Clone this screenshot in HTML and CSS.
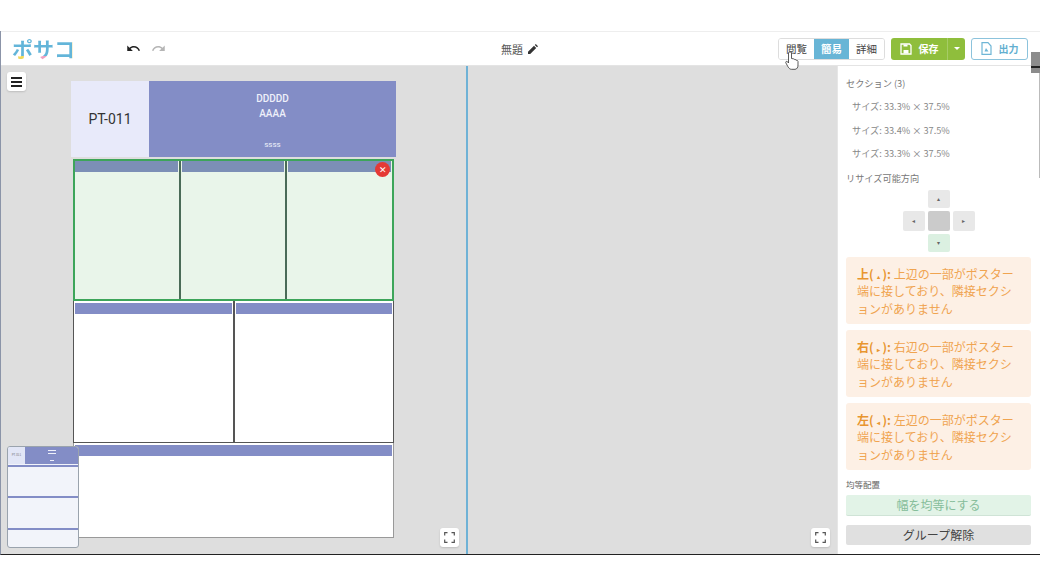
FILE: index.html
```html
<!DOCTYPE html>
<html lang="ja">
<head>
    <meta charset="UTF-8" />
    <title>ポサコ</title>
    <link rel="stylesheet" href="styles.css">
</head>

<body>
    <div class="app">
        <header class="topbar">
            <div class="logo"><span class="logo-a">ポ</span><span class="logo-b">サ</span><span class="logo-c">コ</span></div>
            <div class="history">
                <svg width="15" height="15" viewBox="0 0 24 24"><path d="M12.500 8c-2.650 0-5.050.990-6.900 2.600L2 7v9h9l-3.620-3.620c1.390-1.160 3.160-1.880 5.120-1.880 3.540 0 6.550 2.310 7.600 5.500l2.370-.780C21.080 11.030 17.150 8 12.500 8z" fill="#222"/></svg>
                <svg width="15" height="15" viewBox="0 0 24 24"><path d="M18.400 10.600C16.550 8.990 14.150 8 11.500 8c-4.650 0-8.580 3.030-9.960 7.220L3.900 16c1.050-3.190 4.050-5.500 7.600-5.500 1.950 0 3.730.720 5.120 1.880L13 16h9V7z" fill="#b5b5b5"/></svg>
            </div>
            <div class="title">
                <span>無題</span>
                <svg width="10" height="10" viewBox="0 0 10 10"><path d="M0 10V7.800L6 1.800 8.200 4 2.200 10zM6.800 1 7.800 0 10 2.200 9 3.200z" fill="#333"/></svg>
            </div>
            <div class="mode-group">
                <button class="mode">閲覧</button>
                <button class="mode active">簡易</button>
                <button class="mode">詳細</button>
            </div>
            <div class="save-group">
                <button class="save">
                    <svg width="12" height="12" viewBox="0 0 12 12"><path d="M1 1h8.500L11 2.500V11H1z" fill="none" stroke="#fff" stroke-width="1.300"/><path d="M3.500 1.500h4v2h-4zM3.500 7h5v3.500h-5z" fill="#fff"/></svg>
                    保存
                </button>
                <button class="save-arrow"><i></i></button>
            </div>
            <button class="export">
                <svg width="11" height="13" viewBox="0 0 11 13"><path d="M1 .700h6L10 4v8.300H1z" fill="none" stroke="#6fb6d6" stroke-width="1.200"/><path d="M3.500 9.500 5 6l2.500 3.500z" fill="#6fb6d6"/></svg>
                出力
            </button>
            <div class="edge-tab"></div>
        </header>

        <main class="workspace">
            <section class="pane pane-left">
                <button class="menu-btn"><i></i><i></i><i></i></button>

                <div class="poster">
                    <div class="poster-head">
                        <div class="poster-id">PT-011</div>
                        <div class="poster-title">
                            <div>DDDDD</div>
                            <div>AAAA</div>
                            <small>ssss</small>
                        </div>
                    </div>
                    <div class="poster-body">
                        <div class="row row-top">
                            <div class="cell"><div class="cell-bar"></div></div>
                            <div class="cell"><div class="cell-bar"></div></div>
                            <div class="cell"><div class="cell-bar"></div><span class="close">✕</span></div>
                        </div>
                        <div class="row row-mid">
                            <div class="cell"><div class="cell-bar"></div></div>
                            <div class="cell"><div class="cell-bar"></div></div>
                        </div>
                        <div class="row row-bottom">
                            <div class="cell"><div class="cell-bar"></div></div>
                        </div>
                    </div>
                </div>

                <div class="minimap">
                    <div class="mini-head">
                        <div class="mini-id">PT-011</div>
                        <div class="mini-title"><i></i><i></i><b></b></div>
                    </div>
                    <div class="mini-row mini-r1"></div>
                    <div class="mini-row mini-r2"></div>
                    <div class="mini-row mini-r3"></div>
                </div>

                <button class="fit-btn"><svg width="11" height="11" viewBox="0 0 11 11"><path d="M.700 3.500V.700h2.800M7.500.700h2.800v2.800M10.300 7.500v2.800H7.500M3.500 10.300H.700V7.500" fill="none" stroke="#555" stroke-width="1.200"/></svg></button>
            </section>

            <section class="pane pane-right">
                <button class="fit-btn"><svg width="11" height="11" viewBox="0 0 11 11"><path d="M.700 3.500V.700h2.800M7.500.700h2.800v2.800M10.300 7.500v2.800H7.500M3.500 10.300H.700V7.500" fill="none" stroke="#555" stroke-width="1.200"/></svg></button>
            </section>

            <aside class="sidebar">
                <h4>セクション (3)</h4>
                <ul class="size-list">
                    <li>サイズ: 33.3% × 37.5%</li>
                    <li>サイズ: 33.4% × 37.5%</li>
                    <li>サイズ: 33.3% × 37.5%</li>
                </ul>
                <h4 class="resize-head">リサイズ可能方向</h4>
                <div class="dpad">
                    <span class="pad pad-up">▴</span>
                    <span class="pad pad-left">◂</span>
                    <span class="pad pad-center"></span>
                    <span class="pad pad-right">▸</span>
                    <span class="pad pad-down">▾</span>
                </div>
                <div class="notice">
                    <p><b>上(<i>▴</i>):</b> 上辺の一部がポスター</p>
                    <p>端に接しており、隣接セクシ</p>
                    <p>ョンがありません</p>
                </div>
                <div class="notice">
                    <p><b>右(<i>▸</i>):</b> 右辺の一部がポスター</p>
                    <p>端に接しており、隣接セクシ</p>
                    <p>ョンがありません</p>
                </div>
                <div class="notice">
                    <p><b>左(<i>◂</i>):</b> 左辺の一部がポスター</p>
                    <p>端に接しており、隣接セクシ</p>
                    <p>ョンがありません</p>
                </div>
                <h5>均等配置</h5>
                <button class="equal-btn">幅を均等にする</button>
                <button class="ungroup-btn">グループ解除</button>
            </aside>
        </main>
    </div>

    <svg class="pointer" width="14" height="19" viewBox="0 0 14 19"><path d="M3.500 2c0-1.600 3-1.600 3 0v5.500l2 .300c.800 0 1 .400 1.200.800.800-.200 1.300.100 1.500.700.900-.200 1.800.300 1.800 1.200V14c0 2.200-1 4.300-3 4.300H6.500C5 18.300 4 17.300 3 15.800L.800 11.800c-.500-1.200 1-2 1.800-1l.900 1.200z" fill="#fff" stroke="#333" stroke-width=".8"/></svg>
</body>
</html>
```

FILE: styles.css
```css
* {
    box-sizing: border-box;
}

html, body {
    margin: 0;
    height: 585px;
    overflow: hidden;
    background: #fff;
}

body {
    padding-top: 31px;
    position: relative;
    font-family: "Noto Sans CJK JP", "Noto Sans", sans-serif;
    color: #444;
}

button {
    font-family: inherit;
    cursor: pointer;
}

.app {
    height: 524px;
    display: flex;
    flex-direction: column;
    border-left: 1px solid #8b94a8;
    border-bottom: 1px solid #222;
}

/* top bar */
.topbar {
    height: 35px;
    display: flex;
    align-items: center;
    position: relative;
    background: #fff;
    border-top: 1px solid #eee;
    border-bottom: 1px solid #e4e4e4;
    padding: 0 12px 0 11px;
}

.logo {
    width: 62px;
    font-size: 21px;
    font-weight: 700;
    line-height: 1;
    white-space: nowrap;
}

.logo span {
    -webkit-background-clip: text;
    background-clip: text;
    color: transparent;
}

.logo-a {
    background-image: linear-gradient(#63b5d9 76%, #f0d95a 76%);
}

.logo-b {
    background-image: linear-gradient(#63b5d9 76%, #ee9fc0 76%);
}

.logo-c {
    background-image: linear-gradient(90deg, #63b5d9 88%, #e9c94f 88%);
}

.history {
    display: flex;
    gap: 10px;
    margin-left: 52px;
    width: 42px;
}

.title {
    margin-left: 333px;
    display: flex;
    align-items: center;
    gap: 5px;
    font-size: 11px;
    color: #555;
}

.mode-group {
    display: flex;
    margin-left: auto;
    height: 22px;
    border: 1px solid #ddd;
    border-radius: 3px;
    overflow: hidden;
}

.mode {
    width: 35px;
    border: none;
    padding: 0;
    background: #fff;
    font-size: 10.500px;
    color: #444;
}

.mode.active {
    background: #68b5d6;
    color: #fff;
    font-weight: 700;
}

.save-group {
    display: flex;
    height: 22px;
    margin-left: 6px;
    border-radius: 3px;
    overflow: hidden;
}

.save {
    width: 56px;
    border: none;
    padding: 0;
    display: flex;
    align-items: center;
    justify-content: center;
    gap: 7px;
    background: #8fbe3c;
    color: #fff;
    font-size: 10px;
    font-weight: 700;
}

.save-arrow {
    width: 18px;
    border: none;
    border-left: 1px solid #a6cc66;
    padding: 0;
    background: #8fbe3c;
}

.save-arrow i {
    display: block;
    width: 0;
    margin: 0 auto;
    border-left: 3px solid transparent;
    border-right: 3px solid transparent;
    border-top: 3px solid #fff;
}

.export {
    width: 57px;
    height: 22px;
    margin-left: 6px;
    padding: 0;
    display: flex;
    align-items: center;
    justify-content: center;
    gap: 7px;
    background: #fff;
    border: 1px solid #8cc3dc;
    border-radius: 3px;
    color: #63afd0;
    font-size: 10px;
    font-weight: 700;
}

.edge-tab {
    position: absolute;
    right: 0;
    top: 20px;
    width: 9px;
    height: 21px;
    background: #8c8c8c;
    border-top: 14px solid #8c8c8c;
    z-index: 2;
}

.edge-tab::after {
    content: "";
    display: block;
    height: 2px;
    background: #222;
}

/* panes */
.workspace {
    flex: 1;
    display: flex;
    min-height: 0;
    background: #dedede;
}

.pane {
    position: relative;
    height: 100%;
}

.pane-left {
    width: 467px;
    padding: 15px 0 0 70px;
    border-right: 2px solid #6fb2d6;
}

.pane-right {
    width: 369px;
}

.menu-btn {
    position: absolute;
    left: 6px;
    top: 6px;
    width: 19px;
    height: 19px;
    padding: 4px;
    display: flex;
    flex-direction: column;
    justify-content: center;
    gap: 2px;
    background: #fff;
    border: none;
    border-radius: 3px;
    box-shadow: 0 1px 2px rgba(0,0,0,0.15);
}

.menu-btn i {
    display: block;
    height: 2px;
    background: #222;
}

.fit-btn {
    position: absolute;
    right: 7px;
    bottom: 7px;
    width: 19px;
    height: 19px;
    padding: 0;
    display: flex;
    align-items: center;
    justify-content: center;
    background: #fff;
    border: none;
    border-radius: 3px;
    box-shadow: 0 1px 2px rgba(0,0,0,0.15);
}

/* poster */
.poster {
    width: 325px;
}

.poster-head {
    display: flex;
    height: 76px;
}

.poster-id {
    width: 78px;
    display: flex;
    align-items: center;
    justify-content: center;
    background: #e8eafa;
    color: #333;
    font-family: Roboto, sans-serif;
    font-size: 14px;
}

.poster-title {
    flex: 1;
    position: relative;
    padding-top: 11px;
    background: #838dc6;
    color: #eef0fa;
    text-align: center;
    font-family: Roboto, sans-serif;
    font-size: 10px;
    line-height: 14.500px;
    font-weight: 500;
}

.poster-title small {
    position: absolute;
    left: 0;
    right: 0;
    bottom: 5px;
    font-size: 8px;
    font-weight: 400;
}

.poster-body {
    padding: 2px 2px 0;
    display: flex;
    flex-direction: column;
}

.row {
    display: flex;
    background: #fff;
    border: 1px solid #555;
}

.row-top {
    height: 142px;
    border: 2px solid #3da55a;
    background: #e9f5ea;
}

.row-mid {
    height: 142px;
    border-top: none;
}

.row-bottom {
    height: 95px;
    border-top: none;
    border-color: #999;
}

.cell {
    flex: 1;
    position: relative;
    padding: 0 1px;
    border-right: 2px solid #555;
}

.row-top .cell {
    border-right-color: #4a6b58;
}

.cell:last-child {
    border-right: none;
}

.cell-bar {
    height: 11px;
    background: #7c8fb6;
}

.row-top .cell:first-child {
    padding-left: 0;
}

.row-mid .cell-bar,
.row-bottom .cell-bar {
    margin-top: 2px;
    background: #838dc6;
}

.close {
    position: absolute;
    right: 2px;
    top: 1px;
    width: 15px;
    height: 15px;
    border-radius: 50%;
    background: #e53935;
    color: #fff;
    font-size: 9px;
    line-height: 15px;
    text-align: center;
}

/* minimap */
.minimap {
    position: absolute;
    left: 6px;
    top: 380px;
    width: 72px;
    height: 102px;
    background: #f2f4fa;
    border: 1px solid #9aa3ad;
    border-radius: 3px;
    overflow: hidden;
}

.mini-head {
    display: flex;
    height: 17px;
}

.mini-id {
    width: 17px;
    background: #e2e6f6;
    color: #777;
    font-size: 3px;
    line-height: 17px;
    text-align: center;
}

.mini-title {
    flex: 1;
    display: flex;
    flex-direction: column;
    align-items: center;
    padding-top: 3px;
    gap: 2px;
    background: #838dc6;
}

.mini-title i {
    width: 8px;
    height: 1px;
    background: #eef0fa;
}

.mini-title b {
    width: 4px;
    height: 1px;
    margin-top: 4px;
    background: #eef0fa;
}

.mini-row {
    border-top: 2px solid #838dc6;
}

.mini-r1 {
    height: 31px;
    margin-top: 1px;
}

.mini-r2 {
    height: 32px;
}

.mini-r3 {
    height: 19px;
}

/* sidebar */
.sidebar {
    flex: 1;
    min-width: 0;
    padding: 10px 9px 0 8px;
    position: relative;
    background: #fff;
    border-left: 1px solid #e6e6e6;
    color: #777;
}

.sidebar::after {
    content: "";
    position: absolute;
    right: 0;
    top: 4px;
    width: 1px;
    height: 108px;
    background: #bbb;
}

.sidebar h4 {
    margin: 0;
    font-size: 9.200px;
    font-weight: 400;
    line-height: 14px;
}

.size-list {
    list-style: none;
    margin: 0;
    padding: 0;
}

.size-list li {
    padding-left: 6px;
    height: 23.500px;
    padding-top: 9px;
    font-size: 9.200px;
    line-height: 14px;
    color: #888;
}

.sidebar .resize-head {
    margin-top: 10px;
}

.dpad {
    display: grid;
    grid-template-columns: repeat(3, 22px);
    grid-template-rows: 18px 20px 18px;
    gap: 3px;
    justify-content: center;
    margin-top: 5px;
}

.pad {
    display: flex;
    align-items: center;
    justify-content: center;
    background: #e8e8e8;
    border-radius: 2px;
    font-size: 6px;
    color: #666;
}

.pad-up {
    grid-column: 2;
    grid-row: 1;
}

.pad-left {
    grid-column: 1;
    grid-row: 2;
}

.pad-center {
    grid-column: 2;
    grid-row: 2;
    background: #cbcbcb;
}

.pad-right {
    grid-column: 3;
    grid-row: 2;
}

.pad-down {
    grid-column: 2;
    grid-row: 3;
    background: #dbf0e1;
}

.notice {
    margin-top: 6px;
    padding: 8px 11px 0;
    height: 67px;
    background: #fdf0e5;
    border-radius: 3px;
    color: #f0a450;
    font-size: 12px;
    line-height: 17.500px;
}

.notice p {
    margin: 0;
    height: 17.500px;
    white-space: nowrap;
}

.dpad + .notice {
    margin-top: 5px;
}

.notice b {
    color: #e8952f;
}

.notice i {
    font-style: normal;
    font-size: 6px;
    line-height: 1;
    margin: 0 3px;
}

.sidebar h5 {
    margin: 8px 0 0;
    font-size: 8.500px;
    font-weight: 400;
    line-height: 13px;
    color: #666;
}

.equal-btn,
.ungroup-btn {
    display: block;
    width: 100%;
    padding: 0;
    border: none;
    border-radius: 2px;
    font-size: 12px;
}

.equal-btn {
    height: 21px;
    margin-top: 4px;
    background: #e2f3e7;
    border-bottom: 1px solid #cfe3d6;
    color: #86bd9a;
}

.ungroup-btn {
    height: 20px;
    margin-top: 9px;
    background: #e0e0e0;
    color: #444;
}

.pointer {
    position: absolute;
    left: 785px;
    top: 51px;
}
```
